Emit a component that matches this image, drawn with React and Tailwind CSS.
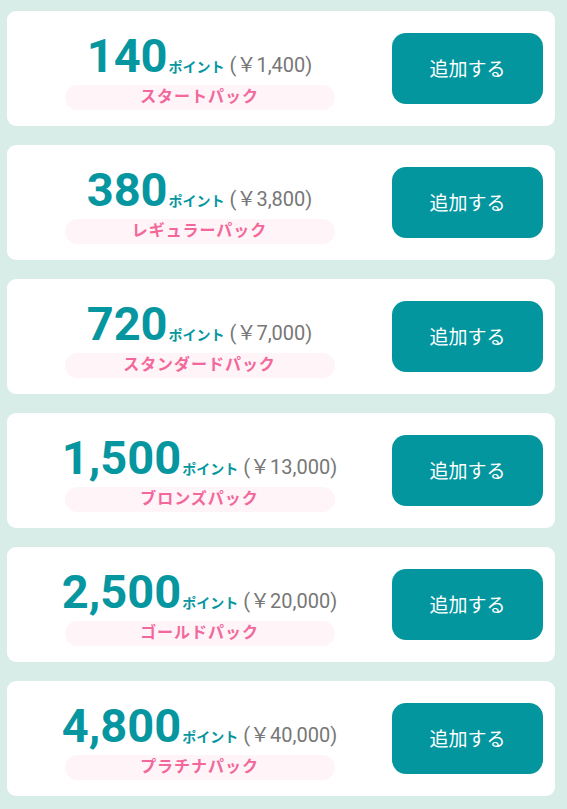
import React from "react";

const packs = [
  { points: "140", price: "1,400", name: "スタートパック" },
  { points: "380", price: "3,800", name: "レギュラーパック" },
  { points: "720", price: "7,000", name: "スタンダードパック" },
  { points: "1,500", price: "13,000", name: "ブロンズパック" },
  { points: "2,500", price: "20,000", name: "ゴールドパック" },
  { points: "4,800", price: "40,000", name: "プラチナパック" },
];

const font = { fontFamily: "Roboto, 'Noto Sans CJK JP', sans-serif" };

export default function App() {
  return (
    <div
      className="min-h-[809px] w-[567px] bg-[#d9ede8] pt-[11px] pl-[7px]"
      style={font}
    >
      <div className="flex w-[548px] flex-col gap-[19px]">
        {packs.map((p) => (
          <PackCard key={p.name} pack={p} />
        ))}
      </div>
    </div>
  );
}

function PackCard({ pack }) {
  return (
    <div className="flex h-[115px] items-center rounded-[9px] bg-white pr-[12px]">
      <div className="flex flex-1 flex-col items-center pt-[4px]">
        <div className="flex items-baseline leading-none">
          <span className="text-[47px] font-bold text-[#06969f]">{pack.points}</span>
          <span className="ml-[1px] text-[14px] font-bold text-[#06969f]">ポイント</span>
          <span className="ml-[5px] text-[20px] text-[#777]">(￥{pack.price})</span>
        </div>
        <div className="mt-[6px] flex h-[25px] w-[270px] items-center justify-center rounded-full bg-[#fff4f7]">
          <span className="text-[16px] font-bold tracking-[0.06em] text-[#f2689b]">
            {pack.name}
          </span>
        </div>
      </div>
      <button className="flex h-[71px] w-[151px] items-center justify-center rounded-[14px] bg-[#03969f] pt-[3px] text-[19px] text-white">
        追加する
      </button>
    </div>
  );
}
